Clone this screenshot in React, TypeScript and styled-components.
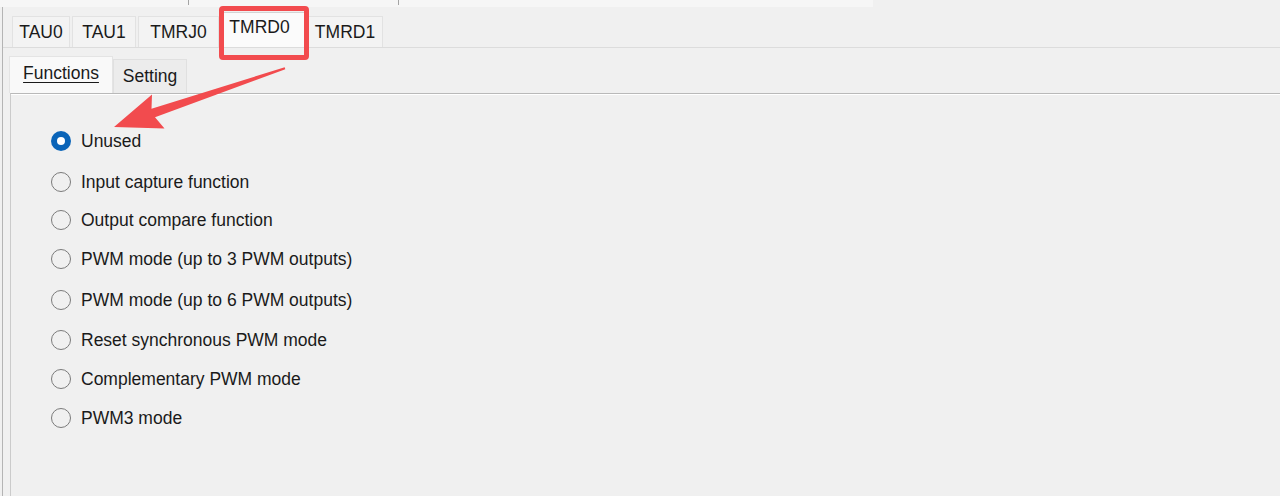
import React from "react";
import styled, { createGlobalStyle } from "styled-components";

const GlobalStyle = createGlobalStyle`
  html, body {
    margin: 0;
    padding: 0;
    background: #f0f0f0;
    overflow: hidden;
  }
  body {
    font-family: "Liberation Sans", Arial, sans-serif;
    color: #1a1a1a;
  }
`;

const Window = styled.div`
  position: relative;
  width: 1280px;
  height: 496px;
  background: #f0f0f0;
  overflow: hidden;
`;

const HeaderStrip = styled.div`
  display: flex;
  width: 873px;
  height: 7px;
  background: #f6f6f6;
`;

const HeaderCell = styled.div<{ $w: number }>`
  width: ${(p) => p.$w}px;
  height: 5px;
  border-right: 1px solid #a4a4a4;
  box-sizing: border-box;
`;

const Frame = styled.div`
  margin-left: 2px;
  border-left: 1px solid #b4b4b4;
  height: 489px;
  display: flex;
  flex-direction: column;
`;

const TabStrip = styled.div`
  display: flex;
  align-items: flex-end;
  height: 41px;
  padding-left: 9px;
  border-bottom: 1px solid #dcdcdc;
  box-sizing: border-box;
`;

const Tab = styled.div<{ $w: number; $active?: boolean }>`
  box-sizing: border-box;
  width: ${(p) => p.$w}px;
  height: ${(p) => (p.$active ? 35 : 31)}px;
  margin-right: ${(p) => (p.$active ? 1 : 2)}px;
  padding-right: ${(p) => (p.$active ? 8 : 0)}px;
  padding-bottom: ${(p) => (p.$active ? 6 : 0)}px;
  display: flex;
  align-items: center;
  justify-content: center;
  font-size: 17.5px;
  background: ${(p) => (p.$active ? "#fbfbfb" : "#f3f3f3")};
  border: 1px solid ${(p) => (p.$active ? "#d4d4d4" : "#e2e2e2")};
  border-bottom: none;
`;

const TabPage = styled.div`
  flex: 1;
  display: flex;
  flex-direction: column;
  padding: 8px 0 0 7px;
`;

const SubTabStrip = styled.div`
  display: flex;
  align-items: flex-end;
  height: 37px;
`;

const SubTab = styled.div<{ $w: number; $active?: boolean }>`
  box-sizing: border-box;
  width: ${(p) => p.$w}px;
  height: ${(p) => (p.$active ? 37 : 34)}px;
  margin-left: ${(p) => (p.$active ? -1 : 0)}px;
  padding-bottom: ${(p) => (p.$active ? 3 : 0)}px;
  display: flex;
  align-items: center;
  justify-content: center;
  font-size: 17.5px;
  background: ${(p) => (p.$active ? "#f9f9f9" : "#ececec")};
  border: 1px solid ${(p) => (p.$active ? "#e4e4e4" : "#e0e0e0")};
  border-bottom: none;

  span {
    text-decoration: ${(p) => (p.$active ? "underline" : "none")};
    text-underline-offset: 3px;
  }
`;

const SubPage = styled.div`
  flex: 1;
  border-top: 1px solid #b9b9b9;
  border-left: 1px solid #cbcbcb;
  box-shadow: inset 0 1px 0 #ffffff;
  padding: 37px 0 0 40px;
`;

const RadioList = styled.div`
  display: flex;
  flex-direction: column;
`;

const RadioRow = styled.label<{ $gap: number }>`
  display: flex;
  align-items: center;
  height: 20px;
  margin-top: ${(p) => p.$gap}px;
  font-size: 17.5px;
  gap: 10px;
`;

const RadioDot = styled.span<{ $checked?: boolean }>`
  position: relative;
  box-sizing: border-box;
  width: 20px;
  height: 20px;
  border-radius: 50%;
  background: ${(p) => (p.$checked ? "#0a64b8" : "transparent")};
  border: ${(p) => (p.$checked ? "none" : "1.6px solid #7b7b7b")};

  &::after {
    content: "";
    display: ${(p) => (p.$checked ? "block" : "none")};
    position: absolute;
    left: 6px;
    top: 6px;
    width: 8px;
    height: 8px;
    border-radius: 50%;
    background: #ffffff;
  }
`;

const Highlight = styled.div`
  position: absolute;
  left: 219px;
  top: 6px;
  width: 90px;
  height: 54px;
  box-sizing: border-box;
  border: 5px solid #f24b4e;
  border-radius: 4px;
  pointer-events: none;
`;

const ArrowLayer = styled.svg`
  position: absolute;
  left: 0;
  top: 0;
  pointer-events: none;
`;

const tabs = [
  { label: "TAU0", w: 58 },
  { label: "TAU1", w: 64 },
  { label: "TMRJ0", w: 81 },
  { label: "TMRD0", w: 85, active: true },
  { label: "TMRD1", w: 76 },
];

const options = [
  { label: "Unused", gap: 0, checked: true },
  { label: "Input capture function", gap: 21 },
  { label: "Output compare function", gap: 18 },
  { label: "PWM mode (up to 3 PWM outputs)", gap: 19 },
  { label: "PWM mode (up to 6 PWM outputs)", gap: 21 },
  { label: "Reset synchronous PWM mode", gap: 20 },
  { label: "Complementary PWM mode", gap: 19 },
  { label: "PWM3 mode", gap: 19 },
];

const App = () => {
  return (
    <Window>
      <GlobalStyle />
      <HeaderStrip>
        <HeaderCell $w={189} />
        <HeaderCell $w={210} />
      </HeaderStrip>
      <Frame>
        <TabStrip>
          {tabs.map((t) => (
            <Tab key={t.label} $w={t.w} $active={t.active}>
              {t.label}
            </Tab>
          ))}
        </TabStrip>
        <TabPage>
          <SubTabStrip>
            <SubTab $w={104} $active>
              <span>Functions</span>
            </SubTab>
            <SubTab $w={74}>
              <span>Setting</span>
            </SubTab>
          </SubTabStrip>
          <SubPage>
            <RadioList>
              {options.map((o) => (
                <RadioRow key={o.label} $gap={o.gap}>
                  <RadioDot $checked={o.checked} />
                  {o.label}
                </RadioRow>
              ))}
            </RadioList>
          </SubPage>
        </TabPage>
      </Frame>
      <Highlight />
      <ArrowLayer width="1280" height="496" viewBox="0 0 1280 496">
        <polygon
          points="114,127 152,94.5 151.5,108.7 284.7,67.3 285.3,69.2 155,117.3 164.5,128.5"
          fill="#f24b4e"
        />
      </ArrowLayer>
    </Window>
  );
};

export default App;
